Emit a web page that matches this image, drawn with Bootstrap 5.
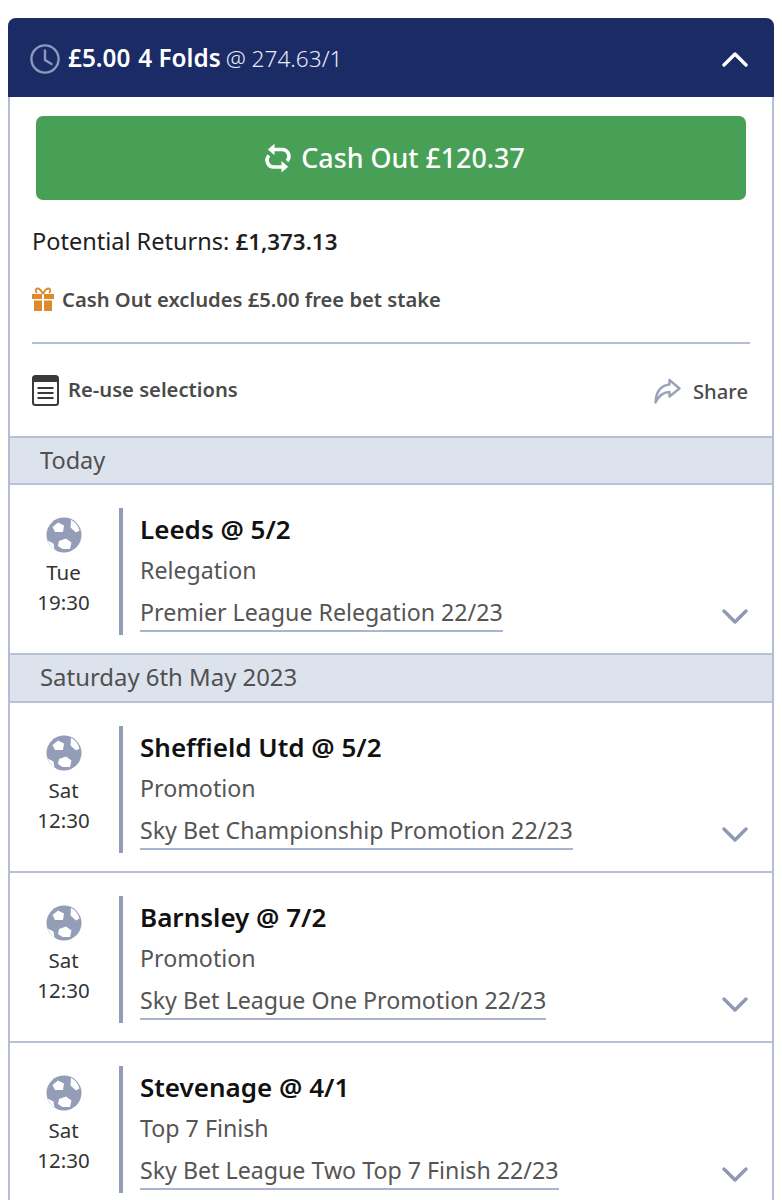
<!DOCTYPE html>
<html lang="en">
<head>
<meta charset="utf-8">
<title>Bet</title>
<link href="https://cdn.jsdelivr.net/npm/bootstrap@5.3.0/dist/css/bootstrap.min.css" rel="stylesheet">
<style>
html,body{height:1200px;overflow:hidden;background:#fff}
body{font-family:"Noto Sans","Open Sans",sans-serif;color:#2b2b2b;padding:18px 8px 0}
.slip{border-left:2px solid #b5bcd6;border-right:2px solid #b5bcd6;border-radius:8px 8px 0 0}
.slip-head{height:79px;margin:0 -2px;background:#1a2b66;color:#fff;border-radius:8px 8px 0 0;padding:2px 26px 0 22px;font-size:24.300px}
.slip-head b{font-weight:600}
.stake{margin-right:8px}
.folds{margin-right:5px}
.odds{font-weight:300;color:#e8ebf5;font-size:22.600px}
.cash{height:84px;margin:19px 26px 0;background:#48a056;color:#fff;border-radius:7px;font-size:26.800px;font-weight:500;padding:0 0 0 6px}
.cash:hover{background:#48a056;color:#fff}
.returns{font-size:23.500px;color:#1e1e1e;margin:27px 22px 0;line-height:28px}
.returns b{font-weight:600;font-size:22.400px}
.freebet{font-size:20.200px;font-weight:600;color:#4a4a4a;margin:29px 22px 0;line-height:28px}
.rule{height:2px;background:#b4bfcc;margin:29px 22px 0}
.tools{font-size:20.200px;font-weight:600;color:#4a4a4a;margin:28px 24px 0 22px;height:36px}
.tools .sharebit{font-weight:500;padding-top:2px}
.reuse span{margin-top:-2px;margin-left:1px}
.dayline{height:49px;margin-top:28px;background:#dde3ed;border-top:2px solid #b9c1d6;border-bottom:2px solid #b9c1d6;padding-left:30px;font-size:23.500px;color:#505050;line-height:44px}
.dayline.next{margin-top:0;height:48px;border-top:0;font-size:23.900px}
.leg{height:170px;padding:23px 24px 0 0;border-bottom:2px solid #b9c1d6}
.leg.open{border-bottom:0}
.when{width:109px;font-size:20.500px;line-height:30px;color:#333;text-align:center;padding-right:2px}
.when svg{display:block;margin:9px auto 4px}
.leg-body{border-left:4px solid #939db8;height:127px;padding-left:17px}
.title{font-size:26px;font-weight:600;color:#111;line-height:30px;margin-top:6px}
.market{font-size:23.200px;color:#555;line-height:30px;margin-top:11px}
.event{display:inline-block;font-size:23.200px;color:#555;line-height:30px;margin-top:12px;border-bottom:2px solid #aab3cf;padding-bottom:3px}
.caret{margin-top:101px}
</style>
</head>
<body>
<div class="slip">
  <div class="slip-head d-flex align-items-center">
    <svg width="30" height="30" viewBox="0 0 30 30" class="me-2 flex-shrink-0" fill="none" stroke="#8c98bd" stroke-width="2.400" stroke-linecap="round" stroke-linejoin="round"><circle cx="15" cy="15" r="13.600"/><path d="M15 6.500V16l6.500 4"/></svg>
    <b class="stake">£5.00</b><b class="folds">4 Folds</b><span class="odds">@ 274.63/1</span>
    <svg class="ms-auto" width="26" height="16" viewBox="0 0 26 16" fill="none" stroke="#fff" stroke-width="3.400" stroke-linecap="round" stroke-linejoin="round"><path d="M2 14 13 3l11 11"/></svg>
  </div>
  <div>
    <a href="#" class="btn cash d-flex align-items-center justify-content-center gap-2 border-0">
      <svg width="30" height="30" viewBox="0 0 30 30" fill="none" stroke="#fff" stroke-width="3.600"><path d="M9 6.500h10a6.800 6.800 0 0 1 5 11.500"/><path d="M21 24H11a6.800 6.800 0 0 1-5-11.500"/><path d="M11.500 0.800v11.400L4.800 6.500z" fill="#fff" stroke="none"/><path d="M18.500 18v11.400l6.700-5.700z" fill="#fff" stroke="none"/></svg>
      <span>Cash Out £120.37</span>
    </a>
    <div class="returns">Potential Returns: <b>£1,373.13</b></div>
    <div class="freebet d-flex align-items-center gap-2">
      <svg width="22" height="24" viewBox="0 0 22 24" fill="#dc8a2c"><path d="M0 7h10v5H0zM12 7h10v5H12zM2 13.500h8V24H2zM12 13.500h8V24h-8z"/><path d="M11 7C9 3 7.500 1.500 5.500 1.500 3.500 1.500 3 4.500 5 6M11 7c2-4 3.500-5.500 5.500-5.500 2 0 2.500 3 .5 4.500" fill="none" stroke="#dc8a2c" stroke-width="1.800"/></svg>
      <span>Cash Out excludes £5.00 free bet stake</span>
    </div>
    <div class="rule"></div>
    <div class="tools d-flex align-items-center justify-content-between">
      <div class="reuse d-flex align-items-center gap-2">
        <svg width="27" height="31" viewBox="0 0 27 31" fill="none"><rect x="1" y="1" width="25" height="29" rx="2.500" stroke="#3a3a3a" stroke-width="2"/><path d="M1 3.500A2.500 2.500 0 0 1 3.500 1h20A2.500 2.500 0 0 1 26 3.500V7H1z" fill="#3a3a3a"/><path d="M5.500 13h16M5.500 18h16M5.500 23h16" stroke="#3a3a3a" stroke-width="2"/></svg>
        <span>Re-use selections</span>
      </div>
      <div class="d-flex align-items-center gap-2 sharebit">
        <svg class="me-1" width="27" height="26" viewBox="0 0 27 26" fill="none" stroke="#9aa3bb" stroke-width="2.400" stroke-linejoin="round"><path d="M15.500 2 25.500 10.500 15.500 18.500V14C9 14 5 17.500 1.500 24.500 2 14 7 7.500 15.500 6.500z"/></svg>
        <span>Share</span>
      </div>
    </div>
  </div>

  <div class="dayline">Today</div>
  <div class="leg d-flex">
    <div class="when"><svg width="36" height="36" viewBox="0 0 36 36"><use href="#ball"/></svg><div>Tue<br>19:30</div></div>
    <div class="leg-body flex-grow-1">
      <div class="title">Leeds @ 5/2</div>
      <div class="market">Relegation</div>
      <div class="event">Premier League Relegation 22/23</div>
    </div>
    <svg class="caret" width="26" height="16" viewBox="0 0 26 16" fill="none" stroke="#8f99b3" stroke-width="3.400" stroke-linecap="round" stroke-linejoin="round"><path d="M2 2l11 11L24 2"/></svg>
  </div>

  <div class="dayline next">Saturday 6th May 2023</div>
  <div class="leg d-flex">
    <div class="when"><svg width="36" height="36" viewBox="0 0 36 36"><use href="#ball"/></svg><div>Sat<br>12:30</div></div>
    <div class="leg-body flex-grow-1">
      <div class="title">Sheffield Utd @ 5/2</div>
      <div class="market">Promotion</div>
      <div class="event">Sky Bet Championship Promotion 22/23</div>
    </div>
    <svg class="caret" width="26" height="16" viewBox="0 0 26 16" fill="none" stroke="#8f99b3" stroke-width="3.400" stroke-linecap="round" stroke-linejoin="round"><path d="M2 2l11 11L24 2"/></svg>
  </div>
  <div class="leg d-flex">
    <div class="when"><svg width="36" height="36" viewBox="0 0 36 36"><use href="#ball"/></svg><div>Sat<br>12:30</div></div>
    <div class="leg-body flex-grow-1">
      <div class="title">Barnsley @ 7/2</div>
      <div class="market">Promotion</div>
      <div class="event">Sky Bet League One Promotion 22/23</div>
    </div>
    <svg class="caret" width="26" height="16" viewBox="0 0 26 16" fill="none" stroke="#8f99b3" stroke-width="3.400" stroke-linecap="round" stroke-linejoin="round"><path d="M2 2l11 11L24 2"/></svg>
  </div>
  <div class="leg open d-flex">
    <div class="when"><svg width="36" height="36" viewBox="0 0 36 36"><use href="#ball"/></svg><div>Sat<br>12:30</div></div>
    <div class="leg-body flex-grow-1">
      <div class="title">Stevenage @ 4/1</div>
      <div class="market">Top 7 Finish</div>
      <div class="event">Sky Bet League Two Top 7 Finish 22/23</div>
    </div>
    <svg class="caret" width="26" height="16" viewBox="0 0 26 16" fill="none" stroke="#8f99b3" stroke-width="3.400" stroke-linecap="round" stroke-linejoin="round"><path d="M2 2l11 11L24 2"/></svg>
  </div>
</div>
<svg width="0" height="0" class="d-block">
  <defs>
    <g id="ball">
      <circle cx="18" cy="18" r="17.500" fill="#939db8"/>
      <path d="M6.500 10l5.500-4.500 6 3-1 6.500H9z" fill="#fff"/>
      <path d="M25 2.800a17 17 0 0 1 8.500 10.700l-3.500 2-5.500-5z" fill="#fff"/>
      <path d="M13 24l7-2.500 5.500 4-1.500 6.500h-7.500L12 29z" fill="#fff"/>
      <path d="M1.500 23.500c1.500 4 4 7 7 9l-1-6z" fill="#fff"/>
    </g>
  </defs>
</svg>
</body>
</html>
